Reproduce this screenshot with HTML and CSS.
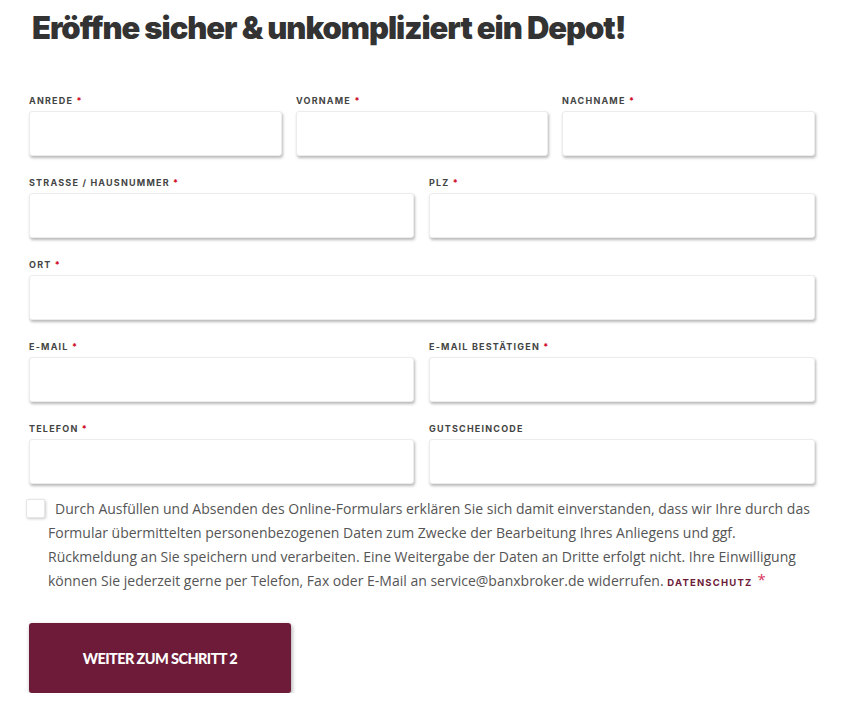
FILE: index.html
```html
<!DOCTYPE html>
<html lang="de">
<head>
<meta charset="utf-8">
<link rel="stylesheet" href="styles.css">
</head>
<body>
<div class="page">
  <h1 class="title">Eröffne sicher &amp; unkompliziert ein Depot!</h1>
  <form class="form">
    <div class="row row-3">
      <div class="field"><label class="lbl">Anrede <span class="req">*</span></label><div class="input"></div></div>
      <div class="field"><label class="lbl">Vorname <span class="req">*</span></label><div class="input"></div></div>
      <div class="field"><label class="lbl">Nachname <span class="req">*</span></label><div class="input"></div></div>
    </div>
    <div class="row row-2">
      <div class="field"><label class="lbl">Strasse / Hausnummer <span class="req">*</span></label><div class="input"></div></div>
      <div class="field"><label class="lbl">PLZ <span class="req">*</span></label><div class="input"></div></div>
    </div>
    <div class="row row-1">
      <div class="field"><label class="lbl">Ort <span class="req">*</span></label><div class="input"></div></div>
    </div>
    <div class="row row-2">
      <div class="field"><label class="lbl">E-Mail <span class="req">*</span></label><div class="input"></div></div>
      <div class="field"><label class="lbl">E-Mail bestätigen <span class="req">*</span></label><div class="input"></div></div>
    </div>
    <div class="row row-2 row-last">
      <div class="field"><label class="lbl">Telefon <span class="req">*</span></label><div class="input"></div></div>
      <div class="field"><label class="lbl">Gutscheincode</label><div class="input"></div></div>
    </div>
    <p class="consent"><span class="check"></span>Durch Ausfüllen und Absenden des Online-Formulars erklären Sie sich damit einverstanden, dass wir Ihre durch das Formular übermittelten personenbezogenen Daten zum Zwecke der Bearbeitung Ihres Anliegens und ggf. Rückmeldung an Sie speichern und verarbeiten. Eine Weitergabe der Daten an Dritte erfolgt nicht. Ihre Einwilligung können Sie jederzeit gerne per Telefon, Fax oder E-Mail an service@banxbroker.de widerrufen. <span class="privacy">Datenschutz</span><span class="star">*</span></p>
    <div class="btn">WEITER ZUM SCHRITT 2</div>
  </form>
</div>
</body>
</html>
```
FILE: styles.css
```css
html, body {
  margin: 0;
  padding: 0;
  background: #ffffff;
}
.page {
  padding: 10px 36px 0 29px;
  width: 786px;
}
.title {
  margin: 0 0 0 3px;
  font-family: Inter, "Open Sans", sans-serif;
  font-weight: 900;
  font-size: 31px;
  line-height: 36px;
  letter-spacing: -1.05px;
  color: #333333;
}
.form {
  margin-top: 49px;
}
.row {
  display: grid;
  column-gap: 15px;
  margin-bottom: 21px;
}
.row-last {
  margin-bottom: 0;
}
.row-3 {
  grid-template-columns: 253px 252px 253px;
  column-gap: 14px;
}
.row-2 {
  grid-template-columns: 385px 386px;
}
.row-1 {
  grid-template-columns: 786px;
}
.lbl {
  display: block;
  font-family: Inter, "Liberation Sans", sans-serif;
  font-weight: 700;
  font-size: 9px;
  line-height: 11px;
  letter-spacing: 1.2px;
  text-transform: uppercase;
  color: #444444;
  margin-bottom: 5px;
}
.req {
  color: #d0021b;
}
.input {
  height: 43px;
  background: #ffffff;
  border: 1px solid #ececec;
  border-radius: 3px;
  box-shadow: 1px 2px 3px rgba(0, 0, 0, 0.28);
}
.consent {
  margin: 13px 0 0 0;
  padding-left: 19px;
  font-family: "Open Sans", sans-serif;
  font-size: 14px;
  line-height: 24px;
  color: #555555;
}
.check {
  display: inline-block;
  vertical-align: -4px;
  width: 17px;
  height: 17px;
  margin-left: -22px;
  margin-right: 10px;
  border: 1px solid #e6e6e6;
  border-radius: 2px;
  box-shadow: 1px 1px 3px rgba(0, 0, 0, 0.2);
  background: #ffffff;
}
.privacy {
  font-family: Inter, sans-serif;
  font-weight: 700;
  font-size: 9.5px;
  letter-spacing: 1.2px;
  text-transform: uppercase;
  color: #6d1b38;
}
.star {
  display: inline-block;
  margin-left: 5px;
  color: #d6335a;
  font-size: 15px;
  line-height: 14px;
  vertical-align: 1px;
}
.btn {
  margin-top: 28px;
  width: 262px;
  height: 70px;
  display: flex;
  align-items: center;
  justify-content: center;
  background: #6d1b38;
  border-radius: 3px;
  box-shadow: 1px 2px 4px rgba(0, 0, 0, 0.35);
  font-family: Lato, sans-serif;
  font-weight: 900;
  font-size: 14.5px;
  letter-spacing: -0.6px;
  color: #ffffff;
}
```
